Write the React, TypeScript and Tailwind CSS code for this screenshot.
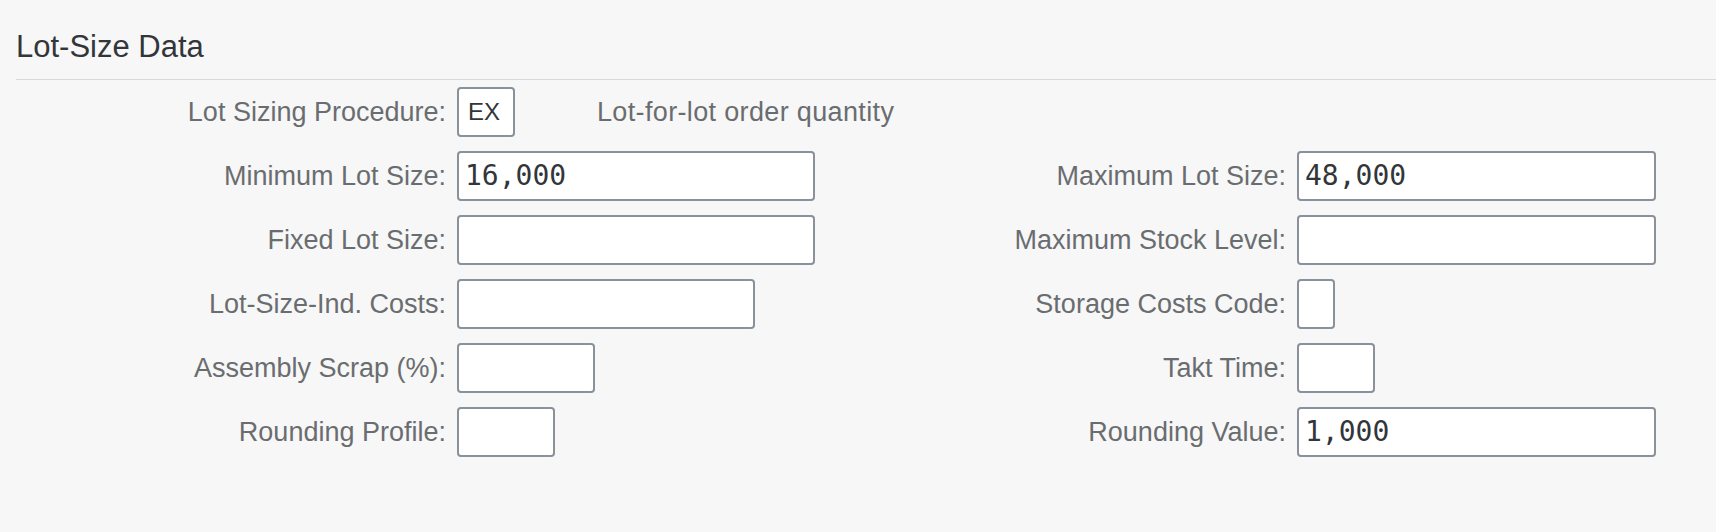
type Field = { label: string; width: string; value?: string };

const rows: { left: Field; right?: Field }[] = [
  { left: { label: "Minimum Lot Size:", width: "w-[358px]", value: "16,000" }, right: { label: "Maximum Lot Size:", width: "w-[359px]", value: "48,000" } },
  { left: { label: "Fixed Lot Size:", width: "w-[358px]" }, right: { label: "Maximum Stock Level:", width: "w-[359px]" } },
  { left: { label: "Lot-Size-Ind. Costs:", width: "w-[298px]" }, right: { label: "Storage Costs Code:", width: "w-[38px]" } },
  { left: { label: "Assembly Scrap (%):", width: "w-[138px]" }, right: { label: "Takt Time:", width: "w-[78px]" } },
  { left: { label: "Rounding Profile:", width: "w-[98px]" }, right: { label: "Rounding Value:", width: "w-[359px]", value: "1,000" } },
];

function Label({ text }: { text: string }) {
  return (
    <div className="flex items-center justify-end pr-[11px] text-[27px] leading-none whitespace-nowrap text-[#6a6d70]">
      {text}
    </div>
  );
}

function Input({ width, value }: { width: string; value?: string }) {
  return (
    <div className={`${width} shrink-0 h-[50px] flex items-center bg-white border-2 border-[#89919a] rounded-[4px] pl-[6px]`}>
      {value && (
        <span className="font-['DejaVu_Sans_Mono',monospace] text-[28px] leading-none text-[#32363a]">{value}</span>
      )}
    </div>
  );
}

export default function App() {
  return (
    <div className="h-[532px] w-full bg-[#f7f7f7] pl-4 font-['Liberation_Sans',Arial,sans-serif]">
      <h2 className="pt-[32px] text-[31px] leading-[30px] text-[#32363a]">Lot-Size Data</h2>
      <div className="mt-[17px] h-px bg-[#d9d9d9]" />

      <div className="mt-[7px] grid grid-cols-[441px_423px_417px_1fr] gap-y-[14px]">
        {/* first row: procedure + description */}
        <Label text="Lot Sizing Procedure:" />
        <div className="flex items-center">
          <div className="w-[58px] shrink-0 h-[50px] flex items-center bg-white border-2 border-[#89919a] rounded-[4px] pl-[9px] text-[24px] leading-none text-[#32363a]">
            EX
          </div>
          <span className="ml-[82px] shrink-0 text-[27px] leading-none tracking-[0.35px] whitespace-nowrap text-[#6a6d70]">
            Lot-for-lot order quantity
          </span>
        </div>
        <div />
        <div />

        {rows.map((r) => (
          <>
            <Label key={r.left.label} text={r.left.label} />
            <div className="flex">
              <Input width={r.left.width} value={r.left.value} />
            </div>
            {r.right ? <Label text={r.right.label} /> : <div />}
            <div className="flex">
              {r.right && <Input width={r.right.width} value={r.right.value} />}
            </div>
          </>
        ))}
      </div>
    </div>
  );
}
